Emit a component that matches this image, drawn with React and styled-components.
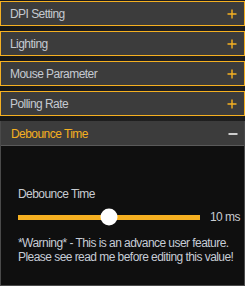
import styled, { createGlobalStyle } from 'styled-components'

const GlobalStyle = createGlobalStyle`
    html, body {
        margin: 0;
        padding: 0;
        background: #1a1a1a;
    }
    body {
        font-family: "Liberation Sans", Arial, sans-serif;
        font-size: 12px;
        letter-spacing: -0.55px;
    }
`

const sections = ['DPI Setting', 'Lighting', 'Mouse Parameter', 'Polling Rate']

function PlusIcon(){
    return(
        <svg width="10" height="10" viewBox="0 0 10 10">
            <path d="M5 0.5V9.5M0.5 5H9.5" stroke="#f5b021" strokeWidth="1.4" fill="none" />
        </svg>
    )
}

function MinusIcon(){
    return(
        <svg width="10" height="10" viewBox="0 0 10 10">
            <path d="M0.5 5H9.5" stroke="#f2f2f2" strokeWidth="1.6" fill="none" />
        </svg>
    )
}

export default function App(){
    const value = 50
    return(
        <Page>
            <GlobalStyle />
            {sections.map(title => (
                <Header key={title}>
                    <span>{title}</span>
                    <PlusIcon />
                </Header>
            ))}
            <OpenItem>
                <Header $open>
                    <span>Debounce Time</span>
                    <MinusIcon />
                </Header>
                <Panel>
                    <Label>Debounce Time</Label>
                    <SliderRow>
                        <Track>
                            <Thumb style={{ left: `${value}%` }} />
                        </Track>
                        <Value>10 ms</Value>
                    </SliderRow>
                    <Warning>
                        *Warning* - This is an advance user feature.<br />
                        Please see read me before editing this value!
                    </Warning>
                </Panel>
            </OpenItem>
        </Page>
    )
}

const Page = styled.div`
    width: 245px;
    height: 286px;
    box-sizing: border-box;
    padding-top: 1px;
    display: flex;
    flex-direction: column;
    gap: 5px;
    background: radial-gradient(ellipse at 70% 20%, #222 0%, #181818 70%);
    overflow: hidden;
`

const Header = styled.div`
    height: 25px;
    flex-shrink: 0;
    box-sizing: border-box;
    display: flex;
    align-items: center;
    justify-content: space-between;
    padding: 0 7px 0 9px;
    background: #3c3c3c;
    border: 1px solid ${p => p.$open ? 'transparent' : '#f5b021'};
    border-bottom-color: ${p => p.$open ? '#5a5a5a' : '#f5b021'};
    color: ${p => p.$open ? '#f5b021' : '#c5cad2'};

    span{
        line-height: 1;
    }
`

const OpenItem = styled.div`
    flex: 1;
    display: flex;
    flex-direction: column;
    border: 1px solid #4a4a4a;
    border-top: none;

    ${Header}{
        border-left: none;
        border-right: none;
        padding-left: 10px;
        padding-right: 6px;
    }
`

const Panel = styled.div`
    flex: 1;
    background: #0f0f0f;
    padding: 41px 0 0 17px;
    color: #c8ccd2;
`

const Label = styled.div`
    line-height: 14px;
`

const SliderRow = styled.div`
    display: flex;
    align-items: center;
    gap: 10px;
    height: 18px;
    margin-top: 7px;
`

const Track = styled.div`
    position: relative;
    flex-shrink: 0;
    width: 182px;
    height: 5px;
    background: #f5b021;
`

const Thumb = styled.div`
    position: absolute;
    top: 50%;
    width: 17px;
    height: 17px;
    border-radius: 50%;
    background: #ffffff;
    transform: translate(-50%, -50%);
`

const Value = styled.span`
    line-height: 14px;
    white-space: nowrap;
`

const Warning = styled.p`
    margin: 10px 0 0;
    line-height: 14px;
    color: #c6ccd6;
    white-space: nowrap;
`
